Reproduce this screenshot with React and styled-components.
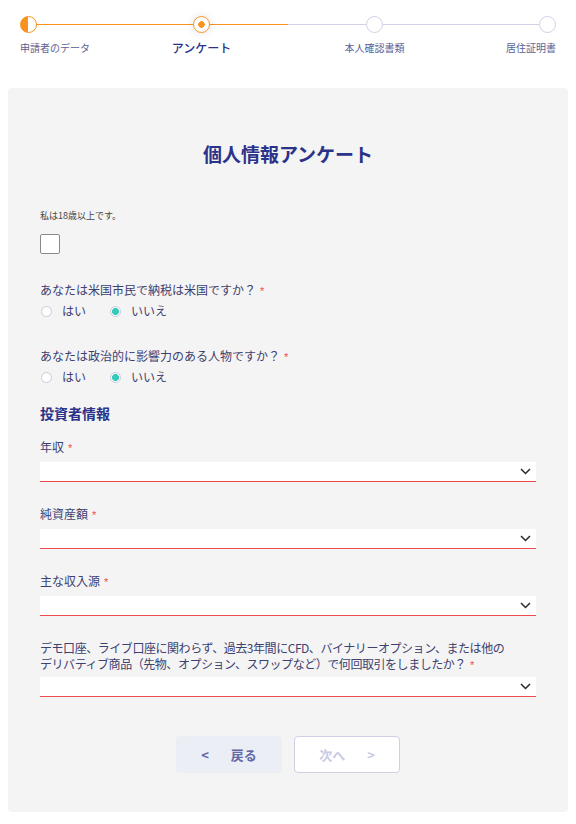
import styled, { createGlobalStyle } from "styled-components";

const ORANGE = "#f7931e";
const LAVENDER = "#d0d1e8";
const NAVY = "#2b3289";
const TEXT = "#3d4170";
const RED = "#ee4c4c";

const steps = [
  { label: "申請者のデータ", state: "done", align: "flex-start" },
  { label: "アンケート", state: "active", align: "center" },
  { label: "本人確認書類", state: "todo", align: "center" },
  { label: "居住証明書", state: "todo", align: "flex-end" },
];

const selects = [
  { lines: ["年収"] },
  { lines: ["純資産額"] },
  { lines: ["主な収入源"] },
  {
    lines: [
      "デモ口座、ライブ口座に関わらず、過去3年間にCFD、バイナリーオプション、または他の",
      "デリバティブ商品（先物、オプション、スワップなど）で何回取引をしましたか？",
    ],
    long: true,
  },
];

export default function App() {
  return (
    <>
      <GlobalStyle />
      <Header>
        <Steps>
          {steps.map((s) => (
            <Step key={s.label} $align={s.align}>
              <Dot $state={s.state} />
              <StepLabel $active={s.state === "active"}>{s.label}</StepLabel>
            </Step>
          ))}
        </Steps>
      </Header>

      <Card>
        <Title>個人情報アンケート</Title>

        <SmallLabel>私は18歳以上です。</SmallLabel>
        <Checkbox />

        <Question>
          あなたは米国市民で納税は米国ですか？<Star>*</Star>
        </Question>
        <RadioRow>
          <RadioOption>
            <Radio />
            はい
          </RadioOption>
          <RadioOption>
            <Radio $checked />
            いいえ
          </RadioOption>
        </RadioRow>

        <Question $top={29}>
          あなたは政治的に影響力のある人物ですか？<Star>*</Star>
        </Question>
        <RadioRow>
          <RadioOption>
            <Radio />
            はい
          </RadioOption>
          <RadioOption>
            <Radio $checked />
            いいえ
          </RadioOption>
        </RadioRow>

        <Section>投資者情報</Section>

        {selects.map((f, i) => (
          <Field key={i} $first={i === 0}>
            <FieldLabel $long={f.long}>
              {f.lines.map((line, j) => (
                <LabelLine key={j}>
                  {line}
                  {j === f.lines.length - 1 && <Star>*</Star>}
                </LabelLine>
              ))}
            </FieldLabel>
            <Select $long={f.long}>
              <svg width="11" height="7" viewBox="0 0 11 7">
                <polyline
                  points="1,1 5.5,5.5 10,1"
                  fill="none"
                  stroke="#2a2a2a"
                  strokeWidth="1.5"
                />
              </svg>
            </Select>
          </Field>
        ))}

        <Buttons>
          <NavButton $variant="back">
            <span>&lt;</span>
            <span>戻る</span>
          </NavButton>
          <NavButton $variant="next">
            <span>次へ</span>
            <span>&gt;</span>
          </NavButton>
        </Buttons>
      </Card>
    </>
  );
}

const GlobalStyle = createGlobalStyle`
  * { box-sizing: border-box; }
  body {
    margin: 0;
    background: #fff;
    font-family: "Noto Sans CJK JP", "Noto Sans", sans-serif;
    color: ${TEXT};
  }
`;

const Header = styled.header`
  height: 88px;
  padding: 16px 20px 0;
`;

const Steps = styled.div`
  position: relative;
  display: flex;
  justify-content: space-between;
  &::before {
    content: "";
    position: absolute;
    left: 8px;
    right: 8px;
    top: 8px;
    height: 1px;
    background: linear-gradient(to right, ${ORANGE} 50%, ${LAVENDER} 50%);
  }
`;

const Step = styled.div`
  position: relative;
  z-index: 1;
  width: 17px;
  display: flex;
  flex-direction: column;
  align-items: ${(p) => p.$align};
`;

const Dot = styled.div`
  width: 17px;
  height: 17px;
  border-radius: 50%;
  border: 1.5px solid ${(p) => (p.$state === "todo" ? LAVENDER : ORANGE)};
  background: ${(p) =>
    p.$state === "done"
      ? `linear-gradient(to right, ${ORANGE} 50%, #fff 50%)`
      : p.$state === "active"
      ? `radial-gradient(circle, ${ORANGE} 3px, #fff 3.5px)`
      : "#fff"};
  box-shadow: ${(p) =>
    p.$state === "active" ? "0 0 8px rgba(40, 40, 80, 0.14)" : "none"};
`;

const StepLabel = styled.div`
  margin-top: 8px;
  white-space: nowrap;
  line-height: 14px;
  font-size: ${(p) => (p.$active ? "12px" : "10px")};
  font-weight: ${(p) => (p.$active ? 500 : 400)};
  color: ${(p) => (p.$active ? NAVY : "#5a6196")};
`;

const Card = styled.main`
  margin: 0 8px;
  padding: 54px 32px 39px;
  background: #f4f4f4;
  border-radius: 4px;
`;

const Title = styled.h1`
  margin: 0;
  text-align: center;
  font-size: 19px;
  line-height: 24px;
  font-weight: 700;
  color: ${NAVY};
`;

const SmallLabel = styled.div`
  margin-top: 44px;
  font-size: 9px;
  line-height: 12px;
  color: #444;
`;

const Checkbox = styled.div`
  margin-top: 12px;
  width: 20px;
  height: 20px;
  background: #fff;
  border: 1.5px solid #8a8a8a;
  border-radius: 2px;
`;

const Question = styled.div`
  margin-top: ${(p) => p.$top ?? 28}px;
  font-size: 12px;
  line-height: 16px;
  color: ${TEXT};
`;

const Star = styled.span`
  margin-left: 4px;
  color: ${RED};
  font-family: "Liberation Sans", sans-serif;
  font-size: 11px;
  line-height: 1;
  letter-spacing: 0;
`;

const RadioRow = styled.div`
  margin-top: 5px;
  display: flex;
  gap: 24px;
  padding-left: 1px;
`;

const RadioOption = styled.label`
  display: flex;
  align-items: center;
  gap: 10px;
  font-size: 12px;
  line-height: 16px;
  color: ${TEXT};
`;

const Radio = styled.span`
  width: 11px;
  height: 11px;
  border-radius: 50%;
  border: 1px solid #c9cae0;
  background: ${(p) =>
    p.$checked ? "radial-gradient(circle, #38c9b9 3.2px, #fff 3.8px)" : "#fff"};
`;

const Section = styled.h2`
  margin: 19px 0 0;
  font-size: 14px;
  line-height: 18px;
  font-weight: 700;
  color: ${NAVY};
`;

const Field = styled.div`
  margin-top: ${(p) => (p.$first ? 17 : 24)}px;
`;

const FieldLabel = styled.div`
  font-size: 12px;
  line-height: 16px;
  letter-spacing: ${(p) => (p.$long ? "-0.45px" : "0")};
  color: ${TEXT};
`;

const LabelLine = styled.div`
  white-space: nowrap;
`;

const Select = styled.div`
  margin-top: ${(p) => (p.$long ? 5 : 7)}px;
  height: 20px;
  background: #fff;
  border-bottom: 1px solid ${RED};
  display: flex;
  align-items: center;
  justify-content: flex-end;
  padding-right: 5px;
`;

const Buttons = styled.div`
  margin-top: 39px;
  display: flex;
  justify-content: center;
  gap: 12px;
`;

const NavButton = styled.button`
  width: 106px;
  height: 37px;
  display: flex;
  align-items: center;
  justify-content: center;
  gap: 22px;
  border-radius: 4px;
  font-family: inherit;
  font-size: 13px;
  font-weight: 700;
  cursor: pointer;
  border: 1px solid ${(p) => (p.$variant === "next" ? "#cfd0e8" : "transparent")};
  background: ${(p) => (p.$variant === "next" ? "#fff" : "#eceef6")};
  color: ${(p) => (p.$variant === "next" ? "#c9cbe3" : "#6269a6")};
`;
